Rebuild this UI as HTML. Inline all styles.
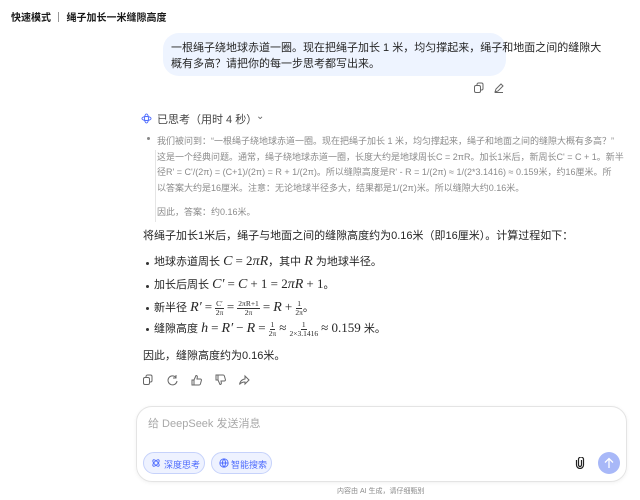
<!DOCTYPE html>
<html><head><meta charset="utf-8"><style>
*{margin:0;padding:0;box-sizing:border-box}
body{width:640px;height:500px;background:#fff;position:relative;overflow:hidden;font-family:"Liberation Sans","Noto Sans CJK SC",sans-serif;color:#262626}
.a{position:absolute;white-space:nowrap}
.m{font-family:"Liberation Serif","Noto Serif CJK SC",serif;font-style:italic}
.n{font-family:"Liberation Serif",serif;font-size:13px}
.f{display:inline-flex;flex-direction:column;align-items:center;vertical-align:middle;font-size:7.5px;line-height:8px;font-family:"Liberation Serif",serif}
.f span:first-child{border-bottom:0.6px solid #333;padding:0 1px}
</style></head><body>
<div class="a" style="left:11px;top:9px;font-size:10px;font-weight:bold;color:#1a1a1a">快速模式 ｜ 绳子加长一米缝隙高度</div>
<div class="a" style="left:163px;top:33px;width:343px;height:43px;background:#eef4ff;border-radius:16px"></div>
<div class="a" style="left:171px;top:40px;font-size:11px;line-height:16px;color:#262626">一根绳子绕地球赤道一圈。现在把绳子加长 1 米，均匀撑起来，绳子和地面之间的缝隙大<br>概有多高？请把你的每一步思考都写出来。</div>
<svg class="a" style="left:473px;top:82px" width="12" height="12" viewBox="0 0 12 12" fill="none" stroke="#666" stroke-width="1"><rect x="1.5" y="3.5" width="6" height="7" rx="1.5"/><path d="M4 3.5V2.5a1.5 1.5 0 0 1 1.5-1.5h3A1.5 1.5 0 0 1 10 2.5v4A1.5 1.5 0 0 1 8.5 8H7.5"/></svg>
<svg class="a" style="left:493px;top:82px" width="12" height="12" viewBox="0 0 12 12" fill="none" stroke="#666" stroke-width="1"><path d="M2 10l1-3 5-5 2 2-5 5zM2 10.5h8"/></svg>
<svg class="a" style="left:141px;top:113px" width="11" height="11" viewBox="0 0 12 12" fill="none" stroke="#4d6bfe" stroke-width="1"><ellipse cx="6" cy="6" rx="5" ry="2.2"/><ellipse cx="6" cy="6" rx="2.2" ry="5"/></svg>
<div class="a" style="left:157px;top:111px;font-size:11px;color:#444">已思考（用时 4 秒）</div>
<div class="a" style="left:256px;top:111px;font-size:10px;color:#666">⌄</div>
<div class="a" style="left:147px;top:137px;width:3px;height:3px;border-radius:50%;background:#888"></div>
<div class="a" style="left:155px;top:150px;width:1px;height:72px;background:#e5e5e5"></div>
<div class="a" style="left:157px;top:134px;font-size:9px;line-height:15.5px;color:#8b8b8b">我们被问到：“一根绳子绕地球赤道一圈。现在把绳子加长 1 米，均匀撑起来，绳子和地面之间的缝隙大概有多高？”<br>这是一个经典问题。通常，绳子绕地球赤道一圈，长度大约是地球周长C = 2πR。加长1米后，新周长C' = C + 1。新半<br>径R' = C'/(2π) = (C+1)/(2π) = R + 1/(2π)。所以缝隙高度是R' - R = 1/(2π) ≈ 1/(2*3.1416) ≈ 0.159米，约16厘米。所<br>以答案大约是16厘米。注意：无论地球半径多大，结果都是1/(2π)米。所以缝隙大约0.16米。</div>
<div class="a" style="left:157px;top:205px;font-size:9px;color:#8b8b8b">因此，答案：约0.16米。</div>
<div class="a" style="left:143px;top:227px;font-size:11px;color:#262626">将绳子加长1米后，绳子与地面之间的缝隙高度约为0.16米（即16厘米）。计算过程如下：</div>
<div class="a" style="left:146px;top:262px;width:3px;height:3px;border-radius:50%;background:#333"></div>
<div class="a" style="left:154px;top:253px;font-size:11px">地球赤道周长 <span class="m" style="font-size:14px">C</span> <span class="n">= 2</span><span class="m" style="font-size:14px">πR</span>，其中 <span class="m" style="font-size:14px">R</span> 为地球半径。</div>
<div class="a" style="left:146px;top:285px;width:3px;height:3px;border-radius:50%;background:#333"></div>
<div class="a" style="left:154px;top:276px;font-size:11px">加长后周长 <span class="m" style="font-size:14px">C′</span> <span class="n">=</span> <span class="m" style="font-size:14px">C</span> <span class="n">+ 1 = 2</span><span class="m" style="font-size:14px">πR</span> <span class="n">+ 1</span>。</div>
<div class="a" style="left:146px;top:307px;width:3px;height:3px;border-radius:50%;background:#333"></div>
<div class="a" style="left:154px;top:297px;font-size:11px;line-height:20px">新半径 <span class="m" style="font-size:14px">R′</span> <span class="n">=</span> <span class="f"><span>C′</span><span>2π</span></span> <span class="n">=</span> <span class="f"><span>2πR+1</span><span>2π</span></span> <span class="n">=</span> <span class="m" style="font-size:14px">R</span> <span class="n">+</span> <span class="f"><span>1</span><span>2π</span></span>。</div>
<div class="a" style="left:146px;top:328px;width:3px;height:3px;border-radius:50%;background:#333"></div>
<div class="a" style="left:154px;top:318px;font-size:11px;line-height:20px">缝隙高度 <span class="m" style="font-size:14px">h</span> <span class="n">=</span> <span class="m" style="font-size:14px">R′</span> <span class="n">−</span> <span class="m" style="font-size:14px">R</span> <span class="n">=</span> <span class="f"><span>1</span><span>2π</span></span> <span class="n">≈</span> <span class="f"><span>1</span><span>2×3.1416</span></span> <span class="n">≈ 0.159</span> 米。</div>
<div class="a" style="left:143px;top:347px;font-size:11px">因此，缝隙高度约为0.16米。</div>
<svg class="a" style="left:142px;top:374px" width="130" height="12" viewBox="0 0 130 12" fill="none" stroke="#666" stroke-width="1">
<rect x="1.5" y="3.5" width="6" height="7" rx="1.5"/><path d="M4 3.5V2.5a1.5 1.5 0 0 1 1.5-1.5h3A1.5 1.5 0 0 1 10 2.5v4A1.5 1.5 0 0 1 8.5 8H7.5"/>
<path d="M34 3.5A4.5 4.5 0 1 0 35 7M34 1v3h-3"/>
<path d="M50 6h2v5h-2zM52 6l2-4.5c1 0 1.5.6 1.3 1.7L55 5h3.3c.8 0 1.3.7 1.1 1.4l-1 3.6c-.2.6-.6 1-1.2 1H52"/>
<path d="M74 6h2V1h-2zM76 6l2 4.5c1 0 1.5-.6 1.3-1.7L79 7h3.3c.8 0 1.3-.7 1.1-1.4l-1-3.6c-.2-.6-.6-1-1.2-1H76"/>
<path d="M103 2l4 4-4 4V8c-2.5 0-4 .5-5.5 2.5.5-3 2-5 5.5-5.5z"/>
</svg>
<div class="a" style="left:136px;top:406px;width:491px;height:76px;border:1px solid #e4e4e4;border-radius:16px;box-shadow:0 1px 4px rgba(0,0,0,.06)"></div>
<div class="a" style="left:148px;top:415px;font-size:11px;color:#a8a8a8">给 DeepSeek 发送消息</div>
<div class="a" style="left:143px;top:452px;width:62px;height:22px;border:1px solid #c6d2fb;background:#eef2ff;border-radius:11px;font-size:9px;color:#4d6bfe;padding:5px 0 0 20px">深度思考</div>
<svg class="a" style="left:151px;top:458px" width="10" height="10" viewBox="0 0 12 12" fill="none" stroke="#4d6bfe" stroke-width="1.1"><ellipse cx="6" cy="6" rx="5" ry="2.2" transform="rotate(45 6 6)"/><ellipse cx="6" cy="6" rx="5" ry="2.2" transform="rotate(-45 6 6)"/></svg>
<div class="a" style="left:211px;top:452px;width:61px;height:22px;border:1px solid #c6d2fb;background:#eef2ff;border-radius:11px;font-size:9px;color:#4d6bfe;padding:5px 0 0 19px">智能搜索</div>
<svg class="a" style="left:219px;top:458px" width="10" height="10" viewBox="0 0 12 12" fill="none" stroke="#4d6bfe" stroke-width="1.1"><circle cx="6" cy="6" r="5"/><path d="M1 6h10M6 1c-2.5 3-2.5 7 0 10M6 1c2.5 3 2.5 7 0 10"/></svg>
<svg class="a" style="left:575px;top:457px" width="10" height="12" viewBox="0 0 10 12" fill="none" stroke="#222" stroke-width="1.2"><path d="M6.5 3v5a1.5 1.5 0 0 1-3 0V2.5a2.5 2.5 0 0 1 5 0V8a3.5 3.5 0 0 1-7 0V3"/></svg>
<div class="a" style="left:598px;top:452px;width:22px;height:22px;border-radius:50%;background:#a8b8f8"></div>
<svg class="a" style="left:603px;top:457px" width="12" height="12" viewBox="0 0 12 12" fill="none" stroke="#fff" stroke-width="1.3"><path d="M6 11V1.5M2 5.5l4-4 4 4"/></svg>
<div class="a" style="left:337px;top:486px;font-size:7px;color:#8b8b8b">内容由 AI 生成，请仔细甄别</div>
</body></html>
